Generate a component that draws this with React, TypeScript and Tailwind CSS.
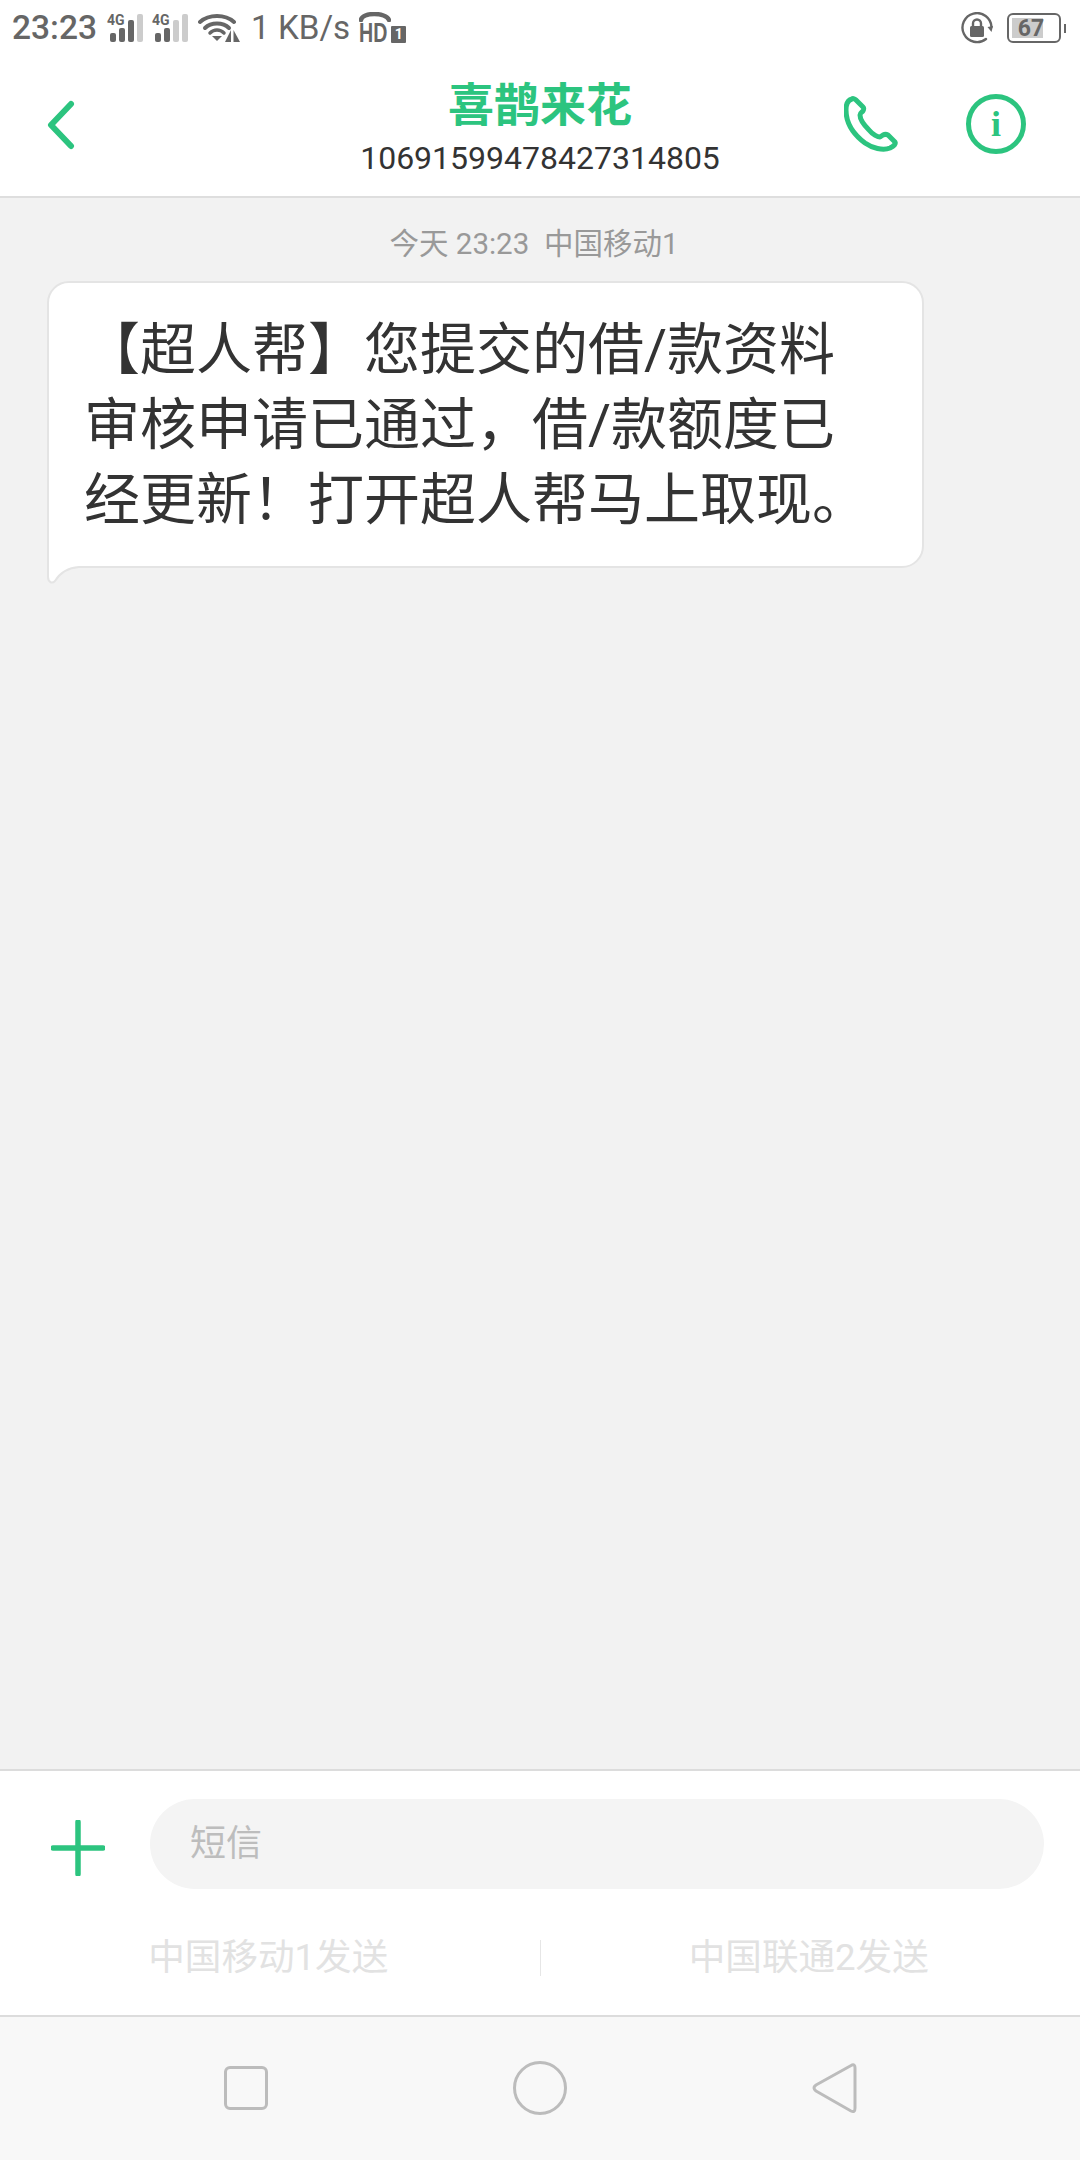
const SANS = "font-['Roboto','Noto_Sans_CJK_SC',sans-serif]";

function Signal({ bars }: { bars: number }) {
  const heights = [9, 14, 22, 28];
  return (
    <div className="relative w-[36px] h-[28px]">
      <span className="absolute left-0 top-[-1px] font-['Roboto',sans-serif] font-bold text-[14px] leading-[14px] text-[#666]">4G</span>
      <div className="absolute inset-0 flex items-end justify-end gap-[3px]">
        {heights.map((h, i) => (
          <div
            key={i}
            className={i < bars ? "w-[6px] rounded-[2px] bg-[#666]" : "w-[6px] rounded-[2px] bg-[#ccc]"}
            style={{ height: h }}
          />
        ))}
      </div>
    </div>
  );
}

function Wifi() {
  return (
    <svg width="43" height="30" viewBox="0 0 43 30" fill="none">
      <path d="M2 9C11 1 27 1 36 9" stroke="#666" strokeWidth="4" strokeLinecap="round" />
      <path d="M7 15C13 9 25 9 31 15" stroke="#666" strokeWidth="4" strokeLinecap="round" />
      <path d="M12 20C16 16 22 16 26 20" stroke="#666" strokeWidth="3.5" strokeLinecap="round" />
      <path d="M14 23H24L19 28Z" fill="#666" />
      <path d="M33 17V29L27 29Z" fill="#666" />
      <path d="M35.5 17V29L42 29Z" fill="#666" />
    </svg>
  );
}

function HdIcon() {
  return (
    <div className="flex flex-col items-start w-[46px] h-[32px]">
      <svg width="32" height="10" viewBox="0 0 32 10" fill="none">
        <path d="M2 8C3 0 27 0 30 8" stroke="#666" strokeWidth="4.5" strokeLinecap="round" />
      </svg>
      <div className="flex items-end gap-[1px] h-[22px]">
        <span className="font-['Liberation_Sans',sans-serif] font-bold text-[#666] text-[28px] leading-[22px] w-[31px] scale-x-[0.7] origin-left whitespace-nowrap">HD</span>
        <span className="w-[15px] h-[17px] mb-[1px] bg-[#666] text-white font-['Roboto',sans-serif] font-bold text-[14px] leading-[17px] text-center rounded-[1px]">1</span>
      </div>
    </div>
  );
}

function LockRotate() {
  return (
    <svg width="32" height="32" viewBox="0 0 32 32" fill="none">
      <path d="M25 27A14.5 14.5 0 1 1 30.5 15" stroke="#666" strokeWidth="2.4" strokeLinecap="round" />
      <path d="M26.5 15L30.5 20L32 14Z" fill="#666" />
      <rect x="9" y="14" width="14" height="11" rx="1.5" fill="#666" />
      <path d="M12 14V11.5A4 4 0 0 1 20 11.5V14" stroke="#666" strokeWidth="2.4" />
    </svg>
  );
}

function Battery() {
  return (
    <div className="flex items-center gap-[3px]">
      <div className="relative w-[54px] h-[30px] rounded-[6px] border-2 border-[#666] overflow-hidden">
        <div className="absolute left-[3px] top-[3px] bottom-[3px] w-[31px] bg-[#ccc]" />
        <span className="absolute inset-0 flex items-center justify-center pr-[6px] font-['Roboto',sans-serif] font-bold text-[23px] leading-none text-[#666]">67</span>
      </div>
      <div className="w-[2px] h-[9px] bg-[#666]" />
    </div>
  );
}

function Phone() {
  return (
    <svg width="54" height="56" viewBox="0 0 54 56" fill="none">
      <path
        d="M8 3C4 4 2 8 2 14C2 26 9 38 21 47C28 52 39 55 46 52C50 50 52 48 51 46L44 39C42 38 41 38 39 39L36 41C34 41 29 39 25 34C19 28 16 22 16 19C16 17 18 16 19 15C20 13 20 12 19 11L12 4C11 3 9 2 8 3Z"
        stroke="#2cc47f"
        strokeWidth="5"
        strokeLinejoin="round"
      />
    </svg>
  );
}

function Info() {
  return (
    <div className="w-[60px] h-[60px] rounded-full border-[5px] border-[#2cc47f] flex items-center justify-center">
      <span className="font-['Liberation_Serif',serif] text-[36px] leading-none font-bold text-[#2cc47f]">i</span>
    </div>
  );
}

export default function App() {
  return (
    <div className={`${SANS} w-[1080px] h-[2160px] flex flex-col bg-[#f2f2f2] overflow-hidden`}>
      <div className="bg-white">
        {/* status bar */}
        <div className="h-[56px] flex items-center pl-[12px] pr-[14px] text-[#666]">
          <span className="text-[33.5px] leading-none font-medium w-[82px] whitespace-nowrap">23:23</span>
          <div className="ml-[13px]"><Signal bars={3} /></div>
          <div className="ml-[9px]"><Signal bars={2} /></div>
          <div className="ml-[10px]"><Wifi /></div>
          <span className="ml-[10px] text-[33.2px] leading-none whitespace-nowrap">1 KB/s</span>
          <div className="ml-[9px]"><HdIcon /></div>
          <div className="ml-auto flex items-center gap-[14px]">
            <LockRotate />
            <Battery />
          </div>
        </div>
        {/* header */}
        <div className="h-[142px] border-b-2 border-[#dedede] flex items-center">
          <div className="w-[340px] pl-[45px] shrink-0">
            <svg width="32" height="50" viewBox="0 0 32 50" fill="none" className="mt-[-3px]">
              <path d="M26 4L6 25L26 46" stroke="#2cc47f" strokeWidth="6" strokeLinecap="round" strokeLinejoin="round" />
            </svg>
          </div>
          <div className="flex-1 flex flex-col items-center mt-[2px]">
            <span className="text-[46px] leading-[58px] font-bold text-[#2cc47f] whitespace-nowrap">喜鹊来花</span>
            <span className="text-[32px] leading-[42px] text-[#333] whitespace-nowrap mt-[3px]">10691599478427314805</span>
          </div>
          <div className="w-[340px] shrink-0 flex items-center justify-end pr-[54px] gap-[68px] mt-[-5px]">
            <Phone />
            <Info />
          </div>
        </div>
      </div>

      {/* conversation */}
      <div className="flex-1 px-[48px] pt-[25px]">
        <div className="text-center text-[29.5px] leading-[42px] text-[#999] whitespace-pre pr-[12px]">今天 23:23  中国移动1</div>
        <div className="relative w-[877px] mt-[16px] bg-white rounded-[22px] rounded-bl-none border-2 border-[#e4e4e4] pl-[35px] pt-[30px] pb-[28px] text-[56px] leading-[75px] text-[#333] ml-[-1px]">
          <div className="whitespace-nowrap">【超人帮】您提交的借/款资料</div>
          <div className="whitespace-nowrap">审核申请已通过，借/款额度已</div>
          <div className="whitespace-nowrap">经更新！打开超人帮马上取现。</div>
          <svg width="38" height="28" viewBox="0 0 38 28" fill="none" className="absolute left-[-2px] top-full mt-[-8px]">
            <path d="M1 0V19Q1 23 4 24.5Q6 25 8 23Q16 10 32 9H38V0Z" fill="#fff" />
            <path d="M1 0V19Q1 23 4 24.5Q6 25 8 23Q16 10 32 9H38" stroke="#e4e4e4" strokeWidth="2" />
          </svg>
        </div>
      </div>

      {/* composer */}
      <div className="h-[246px] bg-white border-t-2 border-[#dcdcdc] flex flex-col">
        <div className="flex items-center pt-[28px] pr-[36px]">
          <div className="w-[150px] shrink-0 flex justify-center pl-[6px]">
            <svg width="54" height="56" viewBox="0 0 54 56" fill="none" className="mt-[8px]">
              <path d="M27 2V54M2 28H52" stroke="#2cc47f" strokeWidth="5.5" strokeLinecap="round" />
            </svg>
          </div>
          <div className="flex-1 h-[90px] rounded-full bg-[#f4f4f4] flex items-center pl-[40px] text-[36px] text-[#bdbdbd]">
            短信
          </div>
        </div>
        <div className="flex items-center mt-[44px] text-[36.6px] leading-[50px] text-[#e2e2e2]">
          <div className="flex-1 text-center pr-[3px]">中国移动1发送</div>
          <div className="w-[1px] h-[36px] bg-[#e6e6e6]" />
          <div className="flex-1 text-center pr-[3px]">中国联通2发送</div>
        </div>
      </div>

      {/* nav bar */}
      <div className="h-[145px] bg-[#f8f8f8] border-t-2 border-[#dcdcdc] flex items-center justify-center gap-[245px] pb-[2px]">
        <div className="w-[44px] h-[44px] rounded-[6px] border-[3px] border-[#bcbcbc] ml-[1px]" />
        <div className="w-[54px] h-[54px] rounded-full border-[3px] border-[#bcbcbc]" />
        <svg width="46" height="54" viewBox="0 0 46 54" fill="none" className="ml-[-1px]">
          <path d="M41 4Q44 3 44 7V47Q44 52 40 50L5 30Q1 27 5 24Z" stroke="#bcbcbc" strokeWidth="3" strokeLinejoin="round" />
        </svg>
      </div>
    </div>
  );
}
